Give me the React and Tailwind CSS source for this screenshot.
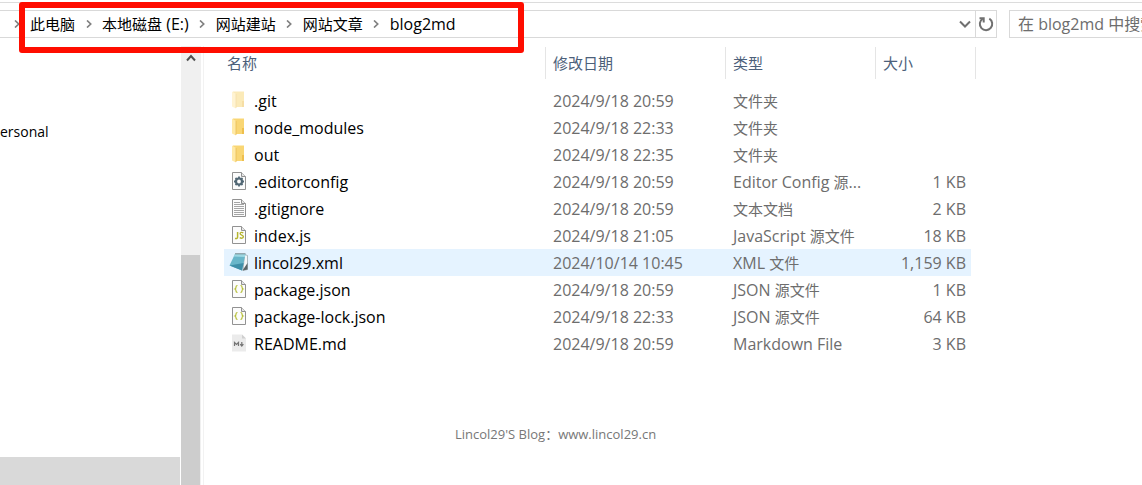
import React from 'react';

const files = [
  { name: '.git', icon: 'hidden-folder', date: '2024/9/18 20:59', type: '文件夹', size: '' },
  { name: 'node_modules', icon: 'folder', date: '2024/9/18 22:33', type: '文件夹', size: '' },
  { name: 'out', icon: 'folder', date: '2024/9/18 22:35', type: '文件夹', size: '' },
  { name: '.editorconfig', icon: 'config', date: '2024/9/18 20:59', type: 'Editor Config 源...', size: '1 KB' },
  { name: '.gitignore', icon: 'text', date: '2024/9/18 20:59', type: '文本文档', size: '2 KB' },
  { name: 'index.js', icon: 'js', date: '2024/9/18 21:05', type: 'JavaScript 源文件', size: '18 KB' },
  { name: 'lincol29.xml', icon: 'notepad', date: '2024/10/14 10:45', type: 'XML 文件', size: '1,159 KB', active: true },
  { name: 'package.json', icon: 'json', date: '2024/9/18 20:59', type: 'JSON 源文件', size: '1 KB' },
  { name: 'package-lock.json', icon: 'json', date: '2024/9/18 22:33', type: 'JSON 源文件', size: '64 KB' },
  { name: 'README.md', icon: 'markdown', date: '2024/9/18 20:59', type: 'Markdown File', size: '3 KB' },
];

const crumbs = ['此电脑', '本地磁盘 (E:)', '网站建站', '网站文章', 'blog2md'];

// Chinese runs are set one pixel smaller than the Latin ones
const Label = ({ children }) =>
  children.split(/([\u4e00-\u9fff]+)/).map((part, i) => (
    <span key={i} className={i % 2 ? 'text-[15px]' : 'text-[16px]'}>{part}</span>
  ));

const Chevron = () => (
  <svg viewBox="0 0 6 8" className="w-[6px] h-2" fill="none" stroke="#808080" strokeWidth="1.7">
    <path d="M1 .5 4.7 4 1 7.5" />
  </svg>
);

const Folder = ({ faded }) => (
  <g opacity={faded ? 0.5 : 1}>
    <path d="M4 1.5h11V17H4z" fill="#f9d674" />
    <path d="M13 11h2v6h-2z" fill="#eebf4d" />
    <path d="M3 1.5l4 2.5v14.5l-4-2z" fill="#ffe9a6" />
    <path d="M7 4v14" stroke="#e9bd55" strokeWidth=".8" />
  </g>
);

const Page = ({ children }) => (
  <g>
    <path d="M3.5 1.5h9l4 4v13h-13z" fill="#fcfcfc" stroke="#929292" />
    <path d="M12.5 1.5v4h4" fill="#e6e6e6" stroke="#929292" />
    {children}
  </g>
);

const Braces = () => (
  <g fill="none" stroke="#b5be35" strokeWidth="1.2">
    <path d="M8.5 6.5c-1.3 0-1.5.4-1.5 1.4 0 1.2 0 1.7-1 2.1 1 .4 1 .9 1 2.1 0 1 .2 1.4 1.5 1.4" />
    <path d="M11.5 6.5c1.3 0 1.5.4 1.5 1.4 0 1.2 0 1.7 1 2.1-1 .4-1 .9-1 2.1 0 1-.2 1.4-1.5 1.4" />
  </g>
);

const FileIcon = ({ kind }) => (
  <svg viewBox="0 1 20 20" className="w-5 h-5 shrink-0">
    {kind === 'folder' && <Folder />}
    {kind === 'hidden-folder' && <Folder faded />}
    {kind === 'config' && (
      <Page>
        <g stroke="#526875" fill="none">
          <circle cx="10" cy="10.5" r="3" strokeWidth="2.2" />
          <path d="M10 5.5v2M10 13.5v2M5 10.5h2M13 10.5h2M6.5 7l1.4 1.4M12.1 12.6l1.4 1.4M13.5 7l-1.4 1.4M7.9 12.6 6.5 14" strokeWidth="1.8" />
        </g>
      </Page>
    )}
    {kind === 'text' && (
      <Page>
        <path d="M5 4.5h6M5 6.5h10M5 8.5h10M5 10.5h10M5 12.5h10M5 14.5h10M5 16.5h10" stroke="#a5a5a5" />
      </Page>
    )}
    {kind === 'js' && (
      <Page>
        <path d="M8.6 7v5c0 1.4-.8 1.8-2.6 1.4" fill="none" stroke="#b5b52e" strokeWidth="1.5" />
        <path d="M14.3 7.8c-1.5-.8-3.2-.5-3.2.8 0 1.8 3.3 1.1 3.3 3 0 1.7-2 2-3.7 1.1" fill="none" stroke="#b5b52e" strokeWidth="1.4" />
      </Page>
    )}
    {kind === 'notepad' && (
      <g>
        <path d="M15.5 2.5l3 1v14l-4.5 1z" fill="#f4f6f7" stroke="#8f9da3" strokeWidth=".7" />
        <path d="M6 2h10.5L13 18.5.5 13.5z" fill="#69b6c9" />
        <path d="M6 2h10.5l-.7 3L4.6 4.6z" fill="#9ed8e3" />
        <path d="M.5 13.5 13 18.5l1.6-7.5z" fill="#3f8fa8" />
        <path d="M6 1.8h10.5" stroke="#71858b" />
        <path d="M13.5 18.5 18.5 11v6.5z" fill="#5a6466" />
      </g>
    )}
    {kind === 'json' && <Page><Braces /></Page>}
    {kind === 'markdown' && (
      <g>
        <path d="M3 1.5h10l4 4v13H3z" fill="#ebebeb" />
        <path d="M13 1.5v4h4z" fill="#cfcfcf" />
        <path d="M5.5 13V9.5l2 2 2-2V13M12.8 9v3.5M11.2 11.2l1.6 1.8 1.6-1.8" fill="none" stroke="#747474" strokeWidth="1.2" />
      </g>
    )}
  </svg>
);

const AddressBar = () => (
  <header className="relative mt-[2px] flex h-9 shrink-0 border-t border-[#dcdcdc] pt-[7px]">
    <nav aria-label="地址" className="flex h-7 min-w-0 flex-1 items-center border-y border-[#d9d9d9] text-black">
      <ol className="flex items-center whitespace-nowrap pl-[3px]">
        {crumbs.map((crumb) => (
          <li key={crumb} className="flex items-center">
            <span className="flex w-[27px] justify-center"><Chevron /></span>
            <a href="#" className="leading-6"><Label>{crumb}</Label></a>
          </li>
        ))}
      </ol>
      <button aria-label="以前的位置" className="ml-auto flex h-full w-5 items-center justify-center">
        <svg viewBox="0 0 12 8" className="h-2 w-3" fill="none" stroke="#707070" strokeWidth="2">
          <path d="m1 1.5 5 5 5-5" />
        </svg>
      </button>
    </nav>
    <button aria-label="刷新" className="flex h-7 w-[22px] items-center justify-center border border-[#d9d9d9]">
      <svg viewBox="0 0 16 16" className="h-4 w-4" fill="none" stroke="#707070" strokeWidth="2">
        <path d="M11.3 2.7A6.2 6.2 0 1 1 4.6 2.8" />
        <path d="M1.5 2.2h4.2v4.3" />
      </svg>
    </button>
    {/* the search box runs on past the right edge of the window */}
    <input
      type="search"
      aria-label="搜索"
      placeholder="在 blog2md 中搜索"
      className="-mr-8 ml-3 h-7 w-[165px] shrink-0 border border-[#d9d9d9] pl-2 text-[16px] outline-none placeholder:text-[#6d6d6d]"
    />
    {/* highlight frame round the path */}
    <div className="pointer-events-none absolute -top-px left-[19px] h-[51px] w-[505px] rounded-[3px] border-[6px] border-[#ff0d00]" />
  </header>
);

const Sidebar = () => (
  <aside className="mt-2 flex w-[204px] shrink-0 border-r border-[#f2f2f2]">
    <div className="flex w-[180px] flex-col justify-between pt-[74px]">
      <span className="text-[14px] leading-6 text-black">ersonal</span>
      <div className="h-7 bg-[#d9d9d9]" />
    </div>
    <div className="ml-px flex w-5 flex-col bg-[#f0f0f0]">
      <div className="flex h-6 items-center justify-center">
        <svg viewBox="0 0 10 8" className="h-2 w-[10px]" fill="none" stroke="#505050" strokeWidth="2">
          <path d="M1 6.5 5 2l4 4.5" />
        </svg>
      </div>
      <div className="mt-[185px] w-[19px] flex-1 bg-[#cdcdcd]" />
    </div>
  </aside>
);

const FileTable = () => (
  <table className="ml-5 w-[752px] table-fixed border-separate border-spacing-0 text-left text-[#6d6d6d]">
    <colgroup>
      <col className="w-[322px]" />
      <col className="w-[180px]" />
      <col className="w-[150px]" />
      <col className="w-[95px]" />
      <col className="w-[5px]" />
    </colgroup>
    <thead>
      <tr className="h-8 text-[15px] text-[#4c607a]">
        <th className="border-r border-[#e5e5e5] pl-[3px] font-normal">名称</th>
        <th className="border-r border-[#e5e5e5] pl-[7px] font-normal">修改日期</th>
        <th className="border-r border-[#e5e5e5] pl-[7px] font-normal">类型</th>
        <th colSpan={2} className="border-r border-[#e5e5e5] pl-[7px] font-normal">大小</th>
      </tr>
    </thead>
    <tbody>
      <tr className="h-2"><td colSpan={5} className="p-0" /></tr>
      {files.map((file) => (
        <tr key={file.name} className={file.active ? 'h-[27px] leading-6 [&>td:not(:last-child)]:bg-[#e5f3ff]' : 'h-[27px] leading-6'}>
          <td className="p-0 pl-[5px]">
            <div className="flex items-center gap-[5px] text-black">
              <FileIcon kind={file.icon} />
              <span className="text-[16px]">{file.name}</span>
            </div>
          </td>
          <td className="p-0 pl-[7px] whitespace-nowrap"><Label>{file.date}</Label></td>
          <td className="p-0 pl-[7px] whitespace-nowrap"><Label>{file.type}</Label></td>
          <td className="p-0 pr-[5px] text-right whitespace-nowrap"><Label>{file.size}</Label></td>
          <td className="p-0" />
        </tr>
      ))}
    </tbody>
  </table>
);

export default function App() {
  return (
    <div className="flex h-screen flex-col overflow-hidden bg-white font-['Open_Sans','Noto_Sans_CJK_SC',sans-serif]">
      <AddressBar />
      <div className="flex min-h-0 flex-1">
        <Sidebar />
        <main className="min-w-0 flex-1 pt-[9px]">
          <FileTable />
          <p className="mt-[67px] pl-[251px] text-[13px] leading-5 text-[#777]">Lincol29'S Blog：www.lincol29.cn</p>
        </main>
      </div>
    </div>
  );
}
